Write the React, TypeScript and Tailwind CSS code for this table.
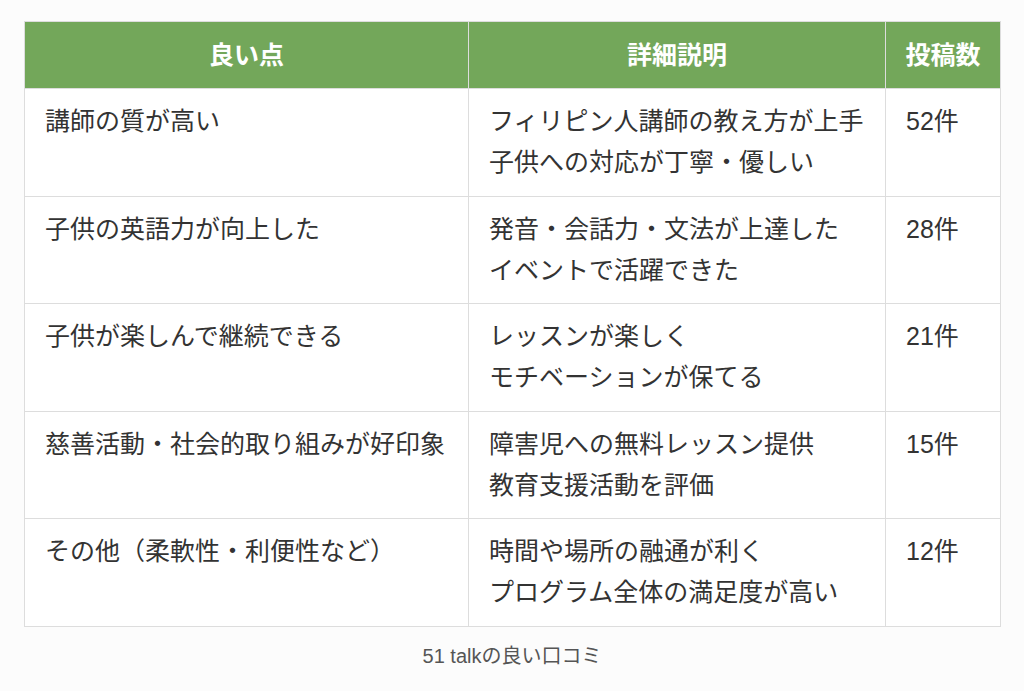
import React from "react";

const rows: { a: string; b: string[]; c: string }[] = [
  { a: "講師の質が高い", b: ["フィリピン人講師の教え方が上手", "子供への対応が丁寧・優しい"], c: "52件" },
  { a: "子供の英語力が向上した", b: ["発音・会話力・文法が上達した", "イベントで活躍できた"], c: "28件" },
  { a: "子供が楽しんで継続できる", b: ["レッスンが楽しく", "モチベーションが保てる"], c: "21件" },
  { a: "慈善活動・社会的取り組みが好印象", b: ["障害児への無料レッスン提供", "教育支援活動を評価"], c: "15件" },
  { a: "その他（柔軟性・利便性など）", b: ["時間や場所の融通が利く", "プログラム全体の満足度が高い"], c: "12件" },
];

export default function App() {
  return (
    <div
      className="w-[1024px] h-[691px] bg-[#fcfcfc] pt-[21px] px-[24px]"
      style={{ fontFamily: '"Liberation Sans", "Noto Sans CJK JP", sans-serif' }}
    >
      <table className="w-[976px] border-collapse table-fixed bg-white text-[25px] leading-[41px] text-[#333]">
        <colgroup>
          <col className="w-[444px]" />
          <col className="w-[417px]" />
          <col className="w-[115px]" />
        </colgroup>
        <thead>
          <tr className="bg-[#73a75a] text-white h-[67px]">
            <th className="border border-[#dddddd] py-[12px] px-[20px] font-bold text-center">良い点</th>
            <th className="border border-[#dddddd] py-[12px] px-[20px] font-bold text-center">詳細説明</th>
            <th className="border border-[#dddddd] py-[12px] px-[16px] font-bold text-center whitespace-nowrap">投稿数</th>
          </tr>
        </thead>
        <tbody>
          {rows.map((r) => (
            <tr key={r.a} className="h-[107.5px]">
              <td className="border border-[#dddddd] pt-[12px] pb-[12px] px-[20px] align-top whitespace-nowrap">{r.a}</td>
              <td className="border border-[#dddddd] pt-[12px] pb-[12px] px-[20px] align-top whitespace-nowrap">
                {r.b.map((l) => (
                  <div key={l}>{l}</div>
                ))}
              </td>
              <td className="border border-[#dddddd] pt-[12px] pb-[12px] px-[20px] align-top">{r.c}</td>
            </tr>
          ))}
        </tbody>
      </table>
      <div className="w-[976px] text-center text-[20px] leading-[28px] text-[#555] mt-[15px]">51 talkの良い口コミ</div>
    </div>
  );
}
